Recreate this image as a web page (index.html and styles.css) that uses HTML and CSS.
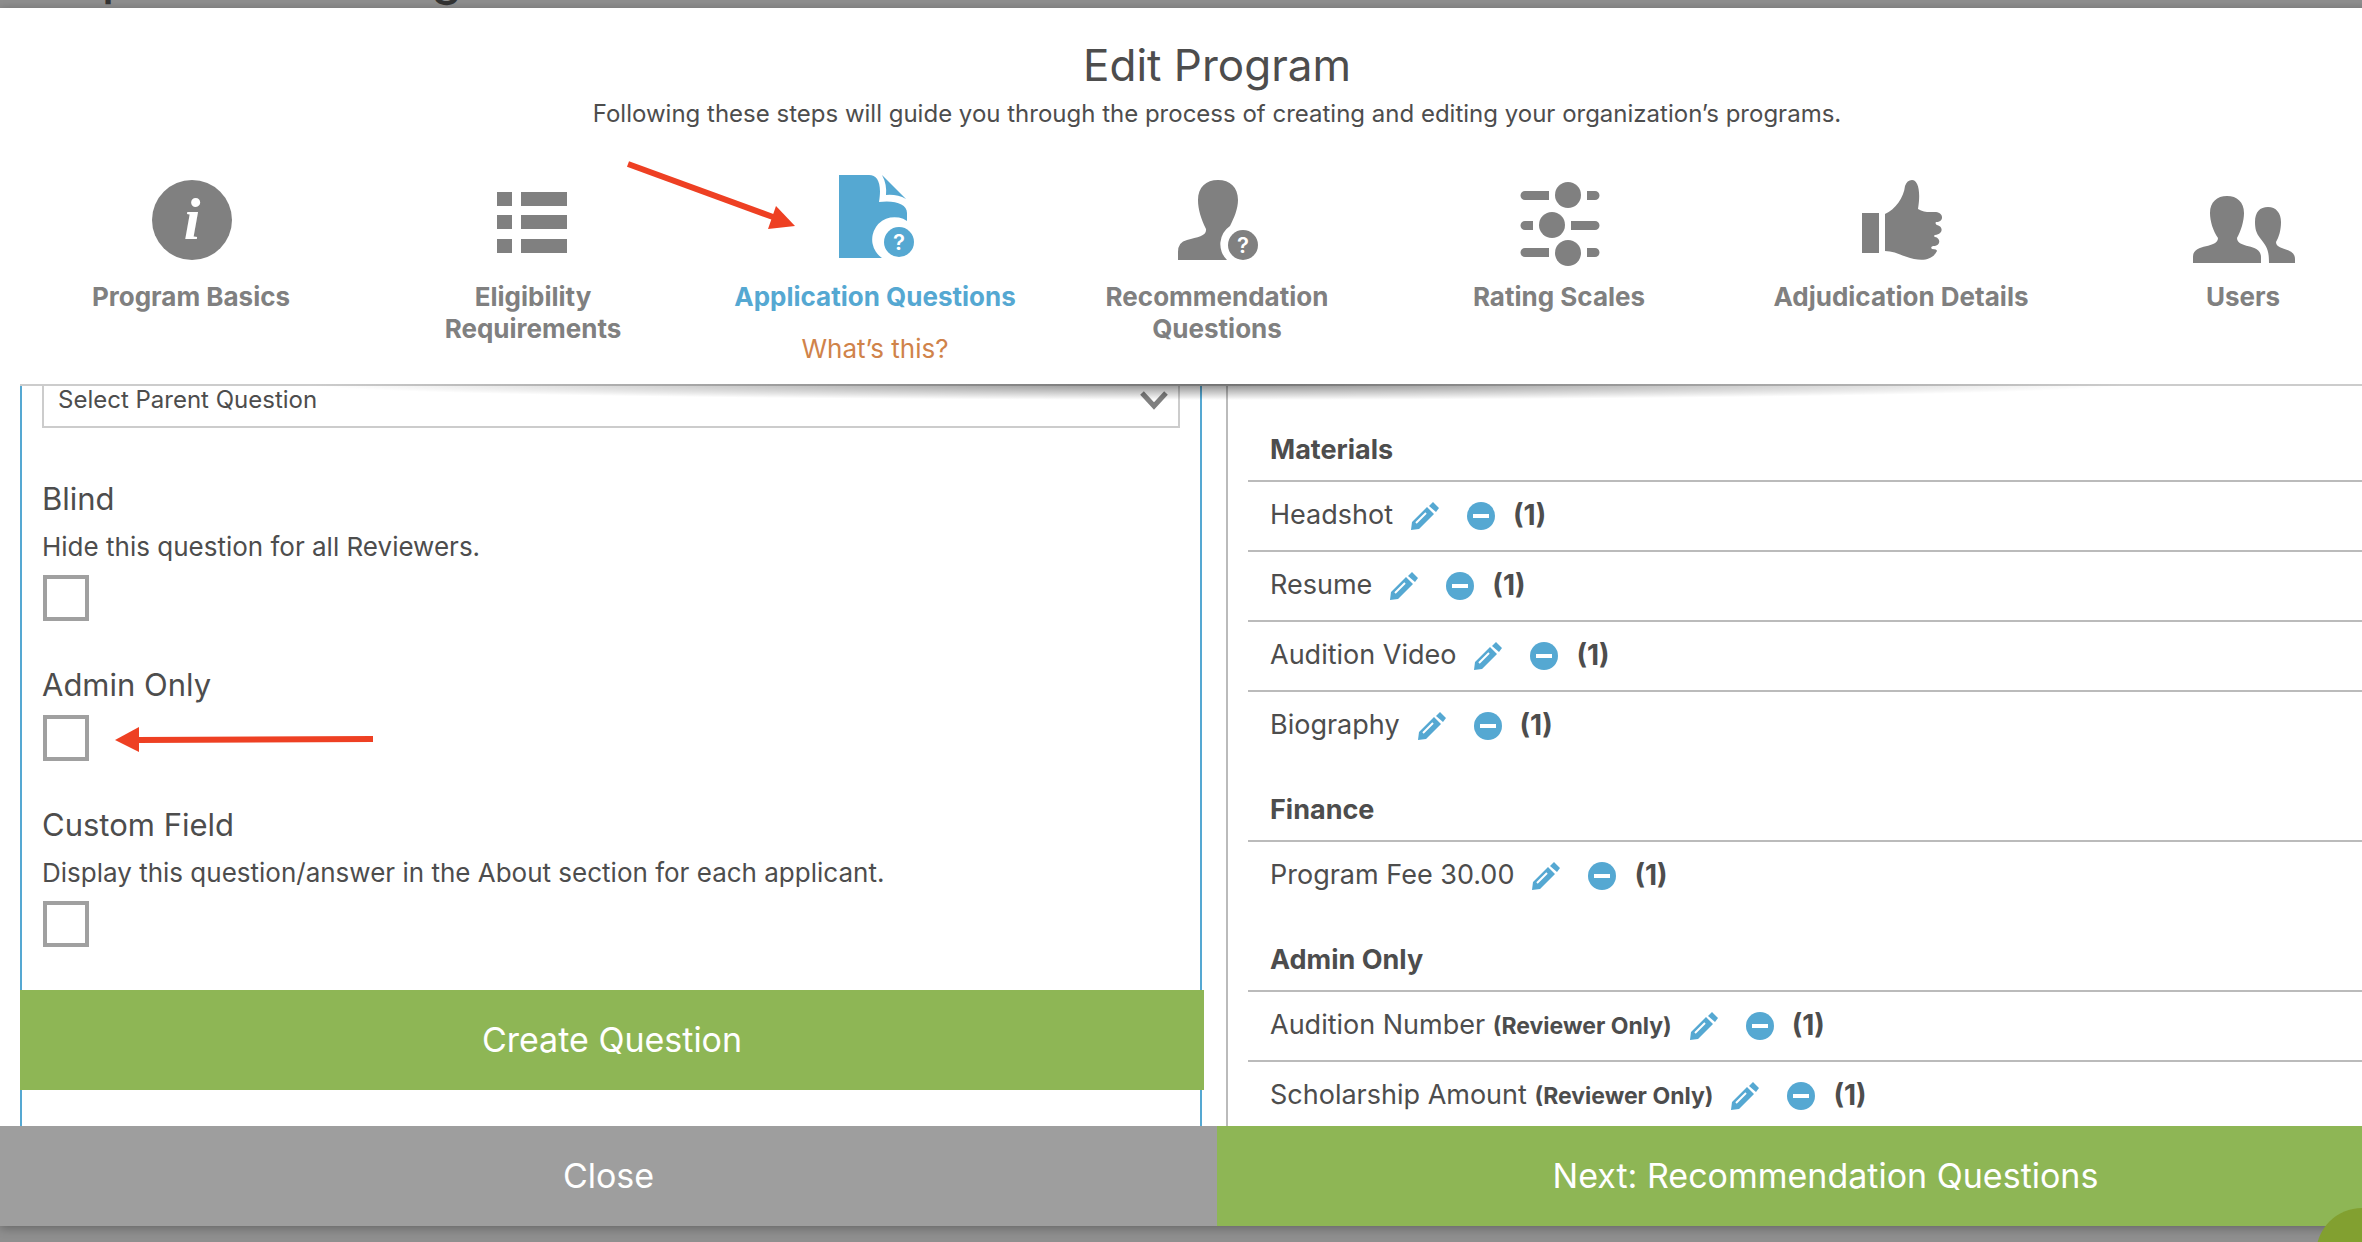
FILE: index.html
```html
<!DOCTYPE html>
<html lang="en">
<head>
    <meta charset="UTF-8">
    <meta name="viewport" content="width=device-width, initial-scale=1.0">
    <title>Edit Program</title>
    <link rel="stylesheet" href="styles.css">
</head>

<body>

    <!-- page behind the dialog -->
    <div class="backdrop-title" aria-hidden="true"><span>p</span><span>g</span></div>

    <!-- shared icons -->
    <svg class="sprite" aria-hidden="true">
        <symbol id="pencil" viewBox="0 0 28 28">
            <path d="M0 28L1 20L16 5L23 12L8 27ZM18 4L22 0L28 6L25 10Z" fill="currentColor"/>
            <path d="M5 21L15 11" stroke="#fff" stroke-width="2"/>
        </symbol>
        <symbol id="minus" viewBox="0 0 28 28">
            <circle cx="14" cy="14" r="14" fill="currentColor"/>
            <path d="M6 14H22" stroke="#fff" stroke-width="4"/>
        </symbol>
    </svg>

    <div class="modal">
        <header class="modal-header">
            <h1>Edit Program</h1>
            <p class="intro">Following these steps will guide you through the process of creating and editing your organization’s programs.</p>

            <nav class="steps">
                <a class="step" href="#basics">
                    <svg class="step-icon" viewBox="136 172 110 96">
                        <circle cx="192" cy="220" r="40"/>
                        <text class="info" x="192" y="239" text-anchor="middle">i</text>
                    </svg>
                    <span>Program Basics</span>
                </a>
                <a class="step" href="#eligibility">
                    <svg class="step-icon" viewBox="477 172 110 96">
                        <path d="M496 192h15v14h-15zM520 192h46v14h-46zM496 215h15v14h-15zM520 215h46v14h-46zM496 239h15v14h-15zM520 239h46v14h-46z"/>
                    </svg>
                    <span>Eligibility<br>Requirements</span>
                </a>
                <div class="step active">
                    <a class="step-link" href="#questions">
                        <svg class="step-icon" viewBox="820 172 110 96">
                            <path d="M839 175H869C878 175 882 184 879 202C895 200 907 204 907 213V221A22 22 0 0 0 882 258H839Z"/>
                            <path d="M882 175L906 199Q897 194 886 195Q887 184 882 175Z"/>
                            <circle cx="899" cy="242" r="15"/>
                            <text class="mark" x="899" y="250" text-anchor="middle">?</text>
                        </svg>
                        <span>Application Questions</span>
                    </a>
                    <a class="help" href="#help">What’s this?</a>
                </div>
                <a class="step" href="#recommendation">
                    <svg class="step-icon" viewBox="1162 172 110 96">
                        <path d="M1178 260V252Q1178 242 1187 240C1198 237 1207 236 1206 229C1201 219 1198 209 1198 200C1198 187 1206 180 1218 180C1230 180 1238 187 1238 200C1238 209 1234 218 1230 226A22 22 0 0 0 1227 260Z"/>
                        <circle cx="1243" cy="245" r="15"/>
                        <text class="mark" x="1243" y="253" text-anchor="middle">?</text>
                    </svg>
                    <span>Recommendation<br>Questions</span>
                </a>
                <a class="step" href="#rating">
                    <svg class="step-icon" viewBox="1504 172 110 96">
                        <path d="M1549 191H1525a4.500 4.500 0 0 0 0 9H1549ZM1587 191H1595a4.500 4.500 0 0 1 0 9H1587ZM1533 221H1525a4.500 4.500 0 0 0 0 9H1533ZM1571 221H1595a4.500 4.500 0 0 1 0 9H1571ZM1549 248H1525a4.500 4.500 0 0 0 0 9H1549ZM1587 248H1595a4.500 4.500 0 0 1 0 9H1587Z"/>
                        <circle cx="1568" cy="195" r="13"/>
                        <circle cx="1552" cy="225" r="13"/>
                        <circle cx="1568" cy="253" r="13"/>
                    </svg>
                    <span>Rating Scales</span>
                </a>
                <a class="step" href="#adjudication">
                    <svg class="step-icon" viewBox="1846 172 110 96">
                        <path d="M1862 213H1879V253H1862ZM1885 214C1895 210 1904 197 1905 186Q1907 180 1912 180C1918 180 1921 191 1918 209C1924 213 1930 212 1936 212C1944 213 1944 222 1936 222C1935 223 1936 225 1937 225C1943 226 1944 234 1935 235Q1933 236 1935 237C1941 238 1941 246 1933 246Q1930 247 1932 249Q1937 249 1937 251C1933 259 1925 261 1914 259C1904 257 1895 251 1885 251Z"/>
                    </svg>
                    <span>Adjudication Details</span>
                </a>
                <a class="step" href="#users">
                    <svg class="step-icon" viewBox="2188 172 110 96">
                        <path d="M2193 263V257C2193 243 2218 249 2218 238C2213 231 2210 221 2210 213C2210 202 2217 196 2227 196C2237 196 2244 202 2244 213C2244 221 2241 231 2237 238C2237 249 2261 243 2261 257V263ZM2269 263C2269 250 2267 247 2260 238C2256 233 2255 228 2255 222C2255 212 2260 207 2268 207C2276 207 2281 213 2281 222C2281 230 2279 237 2276 242C2276 251 2295 247 2295 259V263Z"/>
                    </svg>
                    <span>Users</span>
                </a>
            </nav>

            <svg class="arrow arrow-step" viewBox="0 0 172 70">
                <path d="M5 4L150 57" stroke="currentColor" stroke-width="6"/>
                <path d="M172 66L153 46L145 69Z" fill="currentColor"/>
            </svg>
        </header>

        <main class="modal-body">
            <form class="question-form">
                <div class="fields">
                    <div class="select-wrap">
                        <select aria-label="Parent question">
                            <option>Select Parent Question</option>
                        </select>
                        <svg class="chevron" viewBox="0 0 28 20"><path d="M2 2L14 15L26 2" fill="none" stroke="currentColor" stroke-width="5"/></svg>
                    </div>

                    <div class="field">
                        <label for="blind">Blind</label>
                        <p>Hide this question for all Reviewers.</p>
                        <input id="blind" type="checkbox">
                    </div>
                    <div class="field">
                        <label for="admin-only">Admin Only</label>
                        <input id="admin-only" type="checkbox">
                        <svg class="arrow arrow-admin" viewBox="0 0 258 26">
                            <path d="M22 13L258 12" stroke="currentColor" stroke-width="6"/>
                            <path d="M0 13L24 0V25Z" fill="currentColor"/>
                        </svg>
                    </div>
                    <div class="field">
                        <label for="custom-field">Custom Field</label>
                        <p>Display this question/answer in the About section for each applicant.</p>
                        <input id="custom-field" type="checkbox">
                    </div>
                </div>
                <button class="create" type="button">Create Question</button>
            </form>

            <section class="question-list">
                <h2>Materials</h2>
                <ul>
                    <li>
                        <span>Headshot</span>
                        <button type="button" aria-label="Edit"><svg><use href="#pencil"/></svg></button>
                        <button type="button" aria-label="Remove"><svg><use href="#minus"/></svg></button>
                        <b>(1)</b>
                    </li>
                    <li>
                        <span>Resume</span>
                        <button type="button" aria-label="Edit"><svg><use href="#pencil"/></svg></button>
                        <button type="button" aria-label="Remove"><svg><use href="#minus"/></svg></button>
                        <b>(1)</b>
                    </li>
                    <li>
                        <span>Audition Video</span>
                        <button type="button" aria-label="Edit"><svg><use href="#pencil"/></svg></button>
                        <button type="button" aria-label="Remove"><svg><use href="#minus"/></svg></button>
                        <b>(1)</b>
                    </li>
                    <li>
                        <span>Biography</span>
                        <button type="button" aria-label="Edit"><svg><use href="#pencil"/></svg></button>
                        <button type="button" aria-label="Remove"><svg><use href="#minus"/></svg></button>
                        <b>(1)</b>
                    </li>
                </ul>
                <h2>Finance</h2>
                <ul>
                    <li>
                        <span>Program Fee 30.00</span>
                        <button type="button" aria-label="Edit"><svg><use href="#pencil"/></svg></button>
                        <button type="button" aria-label="Remove"><svg><use href="#minus"/></svg></button>
                        <b>(1)</b>
                    </li>
                </ul>
                <h2>Admin Only</h2>
                <ul>
                    <li>
                        <span>Audition Number <small>(Reviewer Only)</small></span>
                        <button type="button" aria-label="Edit"><svg><use href="#pencil"/></svg></button>
                        <button type="button" aria-label="Remove"><svg><use href="#minus"/></svg></button>
                        <b>(1)</b>
                    </li>
                    <li>
                        <span>Scholarship Amount <small>(Reviewer Only)</small></span>
                        <button type="button" aria-label="Edit"><svg><use href="#pencil"/></svg></button>
                        <button type="button" aria-label="Remove"><svg><use href="#minus"/></svg></button>
                        <b>(1)</b>
                    </li>
                </ul>
            </section>
        </main>

        <footer class="modal-footer">
            <button class="close" type="button">Close</button>
            <button class="next" type="button">Next: Recommendation Questions</button>
        </footer>
    </div>

    <button class="chat" type="button" aria-label="Support"></button>

</body>
</html>
```
FILE: styles.css
```css
* {
    box-sizing: border-box;
}
body {
    font-family: Inter, "Liberation Sans", sans-serif;
    font-size: 26px;
    color: #4d4d4d;
    background: #8f8f8f;
    margin: 0;
    height: 100vh;
    overflow: hidden;
    display: flex;
    flex-direction: column;
}
h1, h2, p, ul {
    margin: 0;
    padding: 0;
}
button {
    font-family: inherit;
    border: none;
    padding: 0;
    cursor: pointer;
}
a {
    color: inherit;
    text-decoration: none;
}
.sprite {
    display: none;
}

/* page behind the dialog */
.backdrop-title {
    flex: none;
    height: 8px;
    padding-left: 102px;
    display: flex;
    align-items: flex-end;
    gap: 300px;
    overflow: hidden;
    color: #333;
    font-size: 48px;
    font-weight: 500;
    line-height: 60px;
}

/* dialog, runs past the right edge of the window */
.modal {
    flex: 1;
    min-height: 0;
    width: calc(100% + 72px);
    margin-bottom: 16px;
    background: #fff;
    box-shadow: 0 2px 10px rgba(0, 0, 0, 0.3);
    display: flex;
    flex-direction: column;
}
.modal-header {
    position: relative;
    z-index: 1;
    flex: none;
    height: 378px;
    margin-left: 20px;
    margin-right: 20px;
    padding-top: 27px;
    background: #fff;
    text-align: center;
    border-bottom: 2px solid #ccc;
}
/* soft shadow that fades out towards both ends */
.modal-header::after {
    content: "";
    position: absolute;
    left: 12%;
    right: 12%;
    top: 100%;
    height: 16px;
    background: radial-gradient(farthest-side at 50% 0, rgba(0, 0, 0, 0.45), rgba(0, 0, 0, 0));
}
h1 {
    font-size: 44px;
    font-weight: 400;
    line-height: 60px;
}
.intro {
    font-size: 24px;
    line-height: 38px;
}
.steps {
    display: grid;
    grid-template-columns: repeat(7, 1fr);
    margin-top: 39px;
}
.step,
.step-link {
    display: flex;
    flex-direction: column;
    align-items: center;
    color: #808080;
    font-weight: 700;
    line-height: 32px;
}
.step-icon {
    width: 110px;
    height: 96px;
    margin-bottom: 13px;
    fill: currentColor;
}
.step .info {
    font: italic bold 60px "Liberation Serif", serif;
    fill: #fff;
}
.step .mark {
    font-size: 22px;
    font-weight: 600;
    fill: #fff;
}
.active .step-link {
    color: #55a8d2;
}
.help {
    margin-top: 20px;
    color: #d0834a;
    font-weight: 400;
}

.arrow {
    position: absolute;
    color: #ee4023;
}
.arrow-step {
    left: 603px;
    top: 152px;
    width: 172px;
    height: 70px;
}
.arrow-admin {
    left: 73px;
    bottom: 8px;
    width: 258px;
    height: 26px;
}

.modal-body {
    flex: 1;
    min-height: 0;
    display: flex;
    gap: 24px;
    padding: 0 8px 0 20px;
    overflow: hidden;
}
.question-form {
    flex: 1;
    border: solid #55a8d2;
    border-width: 0 2px;
}
.fields {
    margin-top: -14px;
    padding: 0 20px 3px;
}
.select-wrap {
    position: relative;
    margin-bottom: 47px;
}
select {
    appearance: none;
    display: block;
    width: 100%;
    height: 56px;
    padding: 0 14px 2px;
    border: 2px solid #ccc;
    border-radius: 0;
    background: #fff;
    color: inherit;
    font-family: inherit;
    font-size: 24px;
}
.chevron {
    position: absolute;
    right: 12px;
    top: 19px;
    width: 28px;
    height: 20px;
    color: #808080;
    pointer-events: none;
}
.field {
    position: relative;
    margin-bottom: 40px;
}
.field label {
    display: block;
    font-size: 31px;
    line-height: 48px;
    margin-bottom: 6px;
}
.field p {
    line-height: 32px;
    padding-top: 2px;
    margin-bottom: 12px;
}
.field input {
    appearance: none;
    display: block;
    width: 46px;
    height: 46px;
    margin: 0 1px;
    border: 4px solid #a0a0a0;
}
.create {
    display: block;
    width: calc(100% + 6px);
    height: 100px;
    margin-left: -2px;
    padding-bottom: 2px;
    background: #8eb655;
    color: #fff;
    font-size: 34px;
}

.question-list {
    flex: 1;
    padding-left: 20px;
    border-left: 2px solid #bbb;
    padding-top: 14px;
}
.question-list h2 {
    height: 80px;
    padding: 20px 22px 0;
    font-size: 27px;
    font-weight: 700;
    line-height: 60px;
}
.question-list ul {
    list-style: none;
}
.question-list li {
    height: 70px;
    padding: 0 22px;
    border-top: 2px solid #bbb;
    display: flex;
    align-items: center;
    gap: 18px;
    font-size: 27px;
    white-space: nowrap;
}
.question-list span,
.question-list b {
    padding-bottom: 3px;
}
.question-list small {
    font-size: 23px;
    font-weight: 700;
}
.question-list b {
    font-size: 28px;
    font-weight: 700;
}
.question-list button {
    width: 28px;
    height: 28px;
    background: none;
    color: #55a8d2;
}
.question-list button + button {
    margin-left: 10px;
}
.question-list svg {
    display: block;
    width: 28px;
    height: 28px;
}

.modal-footer {
    flex: none;
    display: flex;
}
.modal-footer button {
    flex: 1;
    height: 100px;
    padding-bottom: 2px;
    color: #fff;
    font-size: 34px;
}
.modal-footer .close {
    background: #9e9e9e;
}
.modal-footer .next {
    background: #8eb655;
}

.chat {
    position: fixed;
    right: -46px;
    bottom: -58px;
    width: 92px;
    height: 92px;
    border-radius: 50%;
    background: #82a030;
    z-index: 2;
}
```
